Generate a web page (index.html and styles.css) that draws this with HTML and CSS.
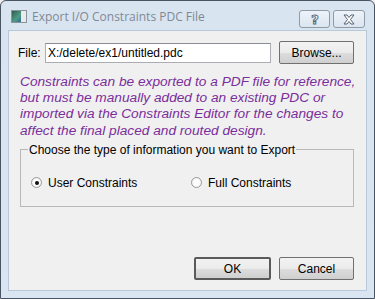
FILE: index.html
```html
<!DOCTYPE html>
<html lang="en">
<head>
  <meta charset="UTF-8">
  <title>Export I/O Constraints PDC File</title>
  <link rel="stylesheet" href="styles.css">
</head>
<body>
  <div class="window">
    <div class="titlebar">
      <span class="app-icon"><span class="app-icon-left"></span></span>
      <span class="title">Export I/O Constraints PDC File</span>
      <div class="caption-buttons">
        <span class="cap-btn help-btn">
          <svg width="12" height="13" viewBox="0 0 12 13">
            <text x="6" y="11" text-anchor="middle" class="help-glyph">?</text>
          </svg>
        </span>
        <span class="cap-btn close-btn">
          <svg width="14" height="11" viewBox="0 0 14 11">
            <path d="M2 1 L5 1 L7 3.5 L9 1 L12 1 L8.5 5.5 L12 10 L9 10 L7 7.5 L5 10 L2 10 L5.5 5.5 Z" fill="#fff" stroke="#55606e" stroke-width="1" stroke-linejoin="round"/>
          </svg>
        </span>
      </div>
    </div>

    <div class="client">
      <div class="file-row">
        <label class="file-label" for="path">File:</label>
        <input id="path" class="file-input" type="text" value="X:/delete/ex1/untitled.pdc">
        <button class="btn">Browse...</button>
      </div>

      <p class="note">Constraints can be exported to a PDF file for reference,<br>
        but must be manually added to an existing PDC or<br>
        imported via the Constraints Editor for the changes to<br>
        affect the final placed and routed design.</p>

      <fieldset class="group">
        <legend>Choose the type of information you want to Export</legend>
        <div class="radio-row">
          <label class="radio-item"><span class="radio checked"></span>User Constraints</label>
          <label class="radio-item"><span class="radio"></span>Full Constraints</label>
        </div>
      </fieldset>

      <div class="actions">
        <button class="btn btn-default">OK</button>
        <button class="btn">Cancel</button>
      </div>
    </div>
  </div>
</body>
</html>
```

FILE: styles.css
```css
body {
  margin: 0;
  background: #f0f0f0;
  font-family: 'Liberation Sans', Arial, sans-serif;
  font-size: 12px;
  color: #000;
}

.window {
  width: 375px;
  height: 299px;
  box-sizing: border-box;
  border: 1px solid #4a5563;
  border-radius: 6px 6px 0 0;
  background: linear-gradient(to bottom, #d9e4f1, #dae5f2);
  padding: 0 7px 7px 7px;
  display: flex;
  flex-direction: column;
}

.titlebar {
  height: 29px;
  display: flex;
  align-items: center;
  padding-left: 3px;
}

.app-icon {
  width: 14px;
  height: 11px;
  border: 1px solid #8a939c;
  background: #e8eaec;
  display: flex;
  margin-top: 1px;
}

.app-icon-left {
  width: 9px;
  background: linear-gradient(135deg, #2f5a4f, #4f9a86 60%, #2c6e8a);
}

.title {
  margin-left: 5px;
  color: #7f8993;
  font-family: 'Open Sans', 'Noto Sans', sans-serif;
  font-size: 12px;
  margin-top: 1px;
}

.caption-buttons {
  margin-left: auto;
  display: flex;
  gap: 3px;
  align-self: flex-start;
  margin-top: 9px;
  margin-right: 2px;
}

.cap-btn {
  width: 29px;
  height: 16px;
  border: 1px solid #8f9aa7;
  border-radius: 3px;
  background: linear-gradient(to bottom, #eef3f9, #dbe5f0);
  display: flex;
  align-items: center;
  justify-content: center;
}

.close-btn {
  width: 30px;
}

.help-glyph {
  font-family: 'DejaVu Sans', sans-serif;
  font-size: 13px;
  font-weight: bold;
  fill: #fff;
  stroke: #55606e;
  stroke-width: 0.9;
}

.client {
  flex: 1;
  background: #f0f0f0;
  border: 1px solid #b9c8d9;
  padding: 10px 12px 10px 9px;
  display: flex;
  flex-direction: column;
}

.file-row {
  display: flex;
  align-items: center;
}

.file-label {
  width: 27px;
}

.file-input {
  width: 227px;
  height: 20px;
  box-sizing: border-box;
  border: 1px solid #abadb3;
  border-top-color: #8a8d94;
  padding: 0 2px;
  margin: 0;
  font: inherit;
  font-size: 12px;
  background: #fff;
}

.btn {
  width: 75px;
  height: 23px;
  margin: 0 0 0 8px;
  border: 1px solid #707070;
  border-radius: 2px;
  background: linear-gradient(to bottom, #f2f2f2 0%, #ebebeb 50%, #dddddd 51%, #cfcfcf 100%);
  font: inherit;
  font-size: 12px;
  color: #000;
  padding: 0;
}

.btn-default {
  border: 2px solid #5a5a5a;
  width: 77px;
}

.note {
  margin: 10px 0 0 2px;
  color: #7a2e9c;
  font-style: italic;
  font-size: 13.7px;
  line-height: 16.2px;
  white-space: nowrap;
}

.group {
  margin: 4px 0 0 2px;
  border: 1px solid #b8b8b8;
  border-radius: 0;
  padding: 0 0 0 10px;
  height: 62px;
}

.group legend {
  padding: 0 1px;
  margin-left: -3px;
}

.radio-row {
  display: flex;
  margin-top: 19px;
}

.radio-item {
  display: flex;
  align-items: center;
  width: 160px;
}

.radio {
  width: 11px;
  height: 11px;
  box-sizing: border-box;
  border-radius: 50%;
  border: 1px solid #9a9a9a;
  background: radial-gradient(circle, #ffffff 40%, #e4e4e4 100%);
  margin-right: 6px;
  display: flex;
  align-items: center;
  justify-content: center;
}

.radio.checked::after {
  content: "";
  width: 4px;
  height: 4px;
  border-radius: 50%;
  background: #111;
}

.actions {
  margin-top: auto;
  display: flex;
  justify-content: flex-end;
}
```
